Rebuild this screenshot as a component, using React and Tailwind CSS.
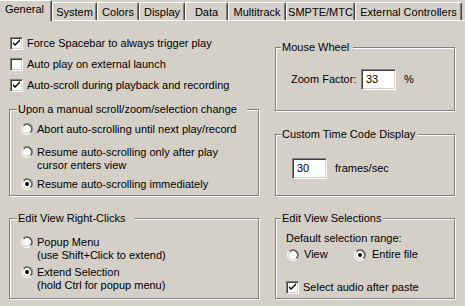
import React from "react";

const F = { fontFamily: '"Liberation Sans", Arial, sans-serif' };

function Check({ checked }) {
  return (
    <span className="relative inline-block w-[13px] h-[13px] shrink-0 bg-white border border-t-[#808080] border-l-[#808080] border-b-white border-r-white shadow-[inset_1px_1px_0_#404040,inset_-1px_-1px_0_#d4d0c8]">
      {checked && (
        <svg className="absolute left-[1px] top-[1px]" width="9" height="9" viewBox="0 0 9 9">
          <path d="M1 3 L1 5 L3 7 L8 2 L8 0 L3 5 Z" fill="#000" />
        </svg>
      )}
    </span>
  );
}

function Radio({ checked }) {
  return (
    <span className="relative inline-block w-[12px] h-[12px] shrink-0">
      <svg width="12" height="12" viewBox="0 0 12 12" className="absolute left-0 top-0">
        <path d="M11.5 6 A5.5 5.5 0 0 0 0.5 6" fill="none" stroke="#808080" strokeWidth="1" transform="rotate(45 6 6)" />
        <path d="M0.5 6 A5.5 5.5 0 0 0 11.5 6" fill="none" stroke="#ffffff" strokeWidth="1" transform="rotate(45 6 6)" />
        <circle cx="6" cy="6" r="4.5" fill="#fff" />
        <path d="M10.5 6 A4.5 4.5 0 0 0 1.5 6" fill="none" stroke="#404040" strokeWidth="1" transform="rotate(45 6 6)" />
        <path d="M1.5 6 A4.5 4.5 0 0 0 10.5 6" fill="none" stroke="#d4d0c8" strokeWidth="1" transform="rotate(45 6 6)" />
        {checked && <circle cx="6" cy="6" r="2" fill="#000" />}
      </svg>
    </span>
  );
}

function Group({ label, className, labelClass, children }) {
  return (
    <div className={"relative border border-[#808080] shadow-[inset_1px_1px_0_#fff,1px_1px_0_#fff] " + className}>
      <span className={"absolute -top-[7px] bg-[#d4d0c8] pl-[1px] leading-[13px] " + labelClass}>{label}</span>
      {children}
    </div>
  );
}

function Input({ value, className }) {
  return (
    <div className={"h-[21px] bg-white border border-t-[#808080] border-l-[#808080] border-b-white border-r-white shadow-[inset_1px_1px_0_#404040,inset_-1px_-1px_0_#d4d0c8] pl-[4px] leading-[19px] " + className}>
      {value}
    </div>
  );
}

const tabs = [
  ["System", 45],
  ["Colors", 42],
  ["Display", 46],
  ["Data", 43],
  ["Multitrack", 58],
  ["SMPTE/MTC", 69],
  ["External Controllers", 107],
];

export default function App() {
  return (
    <div className="w-[465px] h-[306px] bg-[#d4d0c8] overflow-hidden text-[11px] text-black leading-[13px]" style={F}>
      <div className="flex h-[21px]">
        <div className="w-[52px] h-[21px] rounded-tr-[2px] border-t border-white border-r border-r-[#404040] shadow-[inset_-1px_0_0_#808080] flex justify-center pt-[2px] pr-[2px]">
          General
        </div>
        <div className="flex flex-1 items-end border-b border-white">
          {tabs.map(([t, w]) => (
            <div
              key={t}
              style={{ width: w }}
              className="h-[18px] rounded-t-[2px] border-l border-t border-white border-r border-r-[#404040] shadow-[inset_-1px_0_0_#808080] flex justify-center pt-[3px]"
            >
              {t}
            </div>
          ))}
        </div>
      </div>
      <div className="flex">
        <div className="ml-[9px] w-[250px] flex flex-col">
          <div className="mt-[12px] flex flex-col">
            {[
              ["Force Spacebar to always trigger play", true],
              ["Auto play on external launch", false],
              ["Auto-scroll during playback and recording", true],
            ].map(([t, c]) => (
              <div key={t} className="h-[21px] flex items-center gap-[4px] pl-[1px]">
                <Check checked={c} />
                <span>{t}</span>
              </div>
            ))}
          </div>
          <Group label="Upon a manual scroll/zoom/selection change" labelClass="left-[7px] pr-[10px]" className="mt-[13px] h-[87px] pl-[11px]">
            <div className="mt-[13px] flex items-start gap-[4px]">
              <Radio />
              <span>Abort auto-scrolling until next play/record</span>
            </div>
            <div className="mt-[10px] flex items-start gap-[4px]">
              <Radio />
              <span>
                Resume auto-scrolling only after play
                <br />
                cursor enters view
              </span>
            </div>
            <div className="mt-[6px] flex items-start gap-[4px]">
              <Radio checked />
              <span>Resume auto-scrolling immediately</span>
            </div>
          </Group>
          <Group label="Edit View Right-Clicks" labelClass="left-[7px] pr-[9px]" className="mt-[22px] h-[81px] pl-[11px]">
            <div className="mt-[17px] flex items-start gap-[4px]">
              <Radio />
              <span>
                Popup Menu
                <br />
                (use Shift+Click to extend)
              </span>
            </div>
            <div className="mt-[4px] flex items-start gap-[4px]">
              <Radio checked />
              <span>
                Extend Selection
                <br />
                (hold Ctrl for popup menu)
              </span>
            </div>
          </Group>
        </div>
        <div className="ml-[16px] w-[180px] flex flex-col">
          <Group label="Mouse Wheel" labelClass="left-[5px] pr-[4px]" className="mt-[26px] h-[64px] pl-[15px]">
            <div className="mt-[21px] flex items-center">
              <span className="w-[70px]">Zoom Factor:</span>
              <Input value="33" className="w-[35px]" />
              <span className="ml-[8px]">%</span>
            </div>
          </Group>
          <Group label="Custom Time Code Display" labelClass="left-[5px] pr-[3px]" className="mt-[23px] h-[62px] pl-[16px]">
            <div className="mt-[23px] flex items-center">
              <Input value="30" className="w-[35px]" />
              <span className="ml-[8px]">frames/sec</span>
            </div>
          </Group>
          <Group label="Edit View Selections" labelClass="left-[5px] pr-[2px]" className="mt-[22px] h-[81px] pl-[10px]">
            <div className="mt-[13px]">Default selection range:</div>
            <div className="mt-[2px] flex items-center h-[15px] pl-[1px]">
              <Radio />
              <span className="ml-[5px] w-[50px]">View</span>
              <Radio checked />
              <span className="ml-[6px]">Entire file</span>
            </div>
            <div className="mt-[19px] flex items-center gap-[4px]">
              <Check checked />
              <span>Select audio after paste</span>
            </div>
          </Group>
        </div>
      </div>
    </div>
  );
}
